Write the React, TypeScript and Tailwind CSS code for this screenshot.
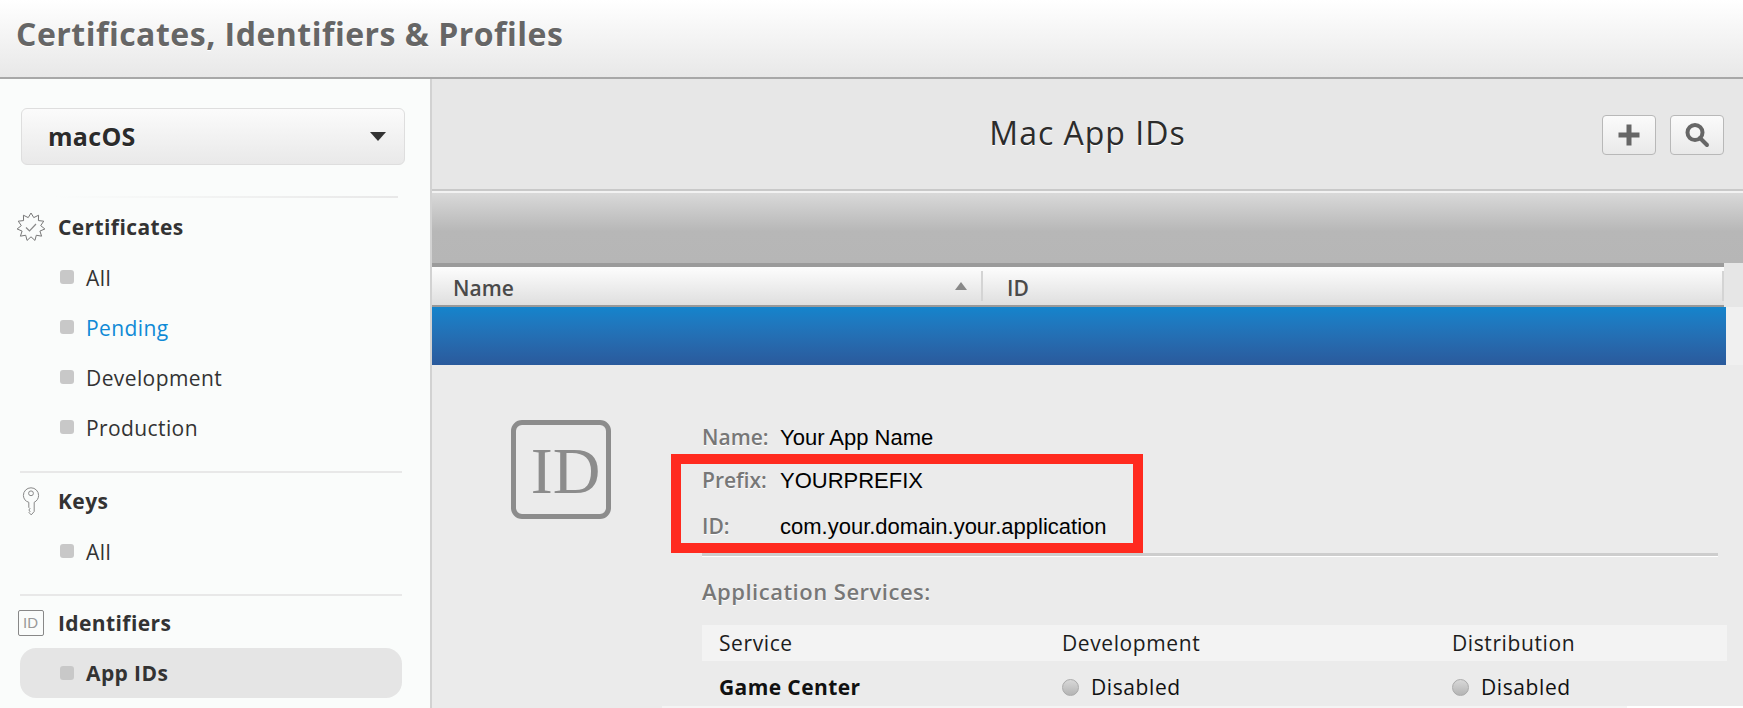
import React from "react";

const sans = "font-['Open_Sans',sans-serif]";

const starPoints = () => {
  const pts: string[] = [];
  for (let i = 0; i < 22; i++) {
    const r = i % 2 === 0 ? 14 : 9.8;
    const a = (i * Math.PI) / 11 - Math.PI / 2;
    pts.push(`${(14 + r * Math.cos(a)).toFixed(2)},${(14 + r * Math.sin(a)).toFixed(2)}`);
  }
  return pts.join(" ");
};

const CertIcon = () => (
  <svg width="28" height="28" viewBox="0 0 28 28" fill="none" stroke="#777" strokeWidth="1">
    <polygon points={starPoints()} />
    <path d="M9 14.5l3.5 3.5 6.5-7" stroke="#888" strokeWidth="1.2" />
  </svg>
);

const KeyIcon = () => (
  <svg width="18" height="29" viewBox="0 0 18 29" fill="none" stroke="#888" strokeWidth="1">
    <path d="M9 .8a7.6 7.6 0 0 1 7.6 7.7c0 3-1.8 5.6-4.4 6.8v9.2l-3 3.4-2.2-2.4 1-1.2-1.2-1.3 1.2-1.3-1.2-1.3V15.3A7.6 7.6 0 0 1 1.4 8.5 7.6 7.6 0 0 1 9 .8z" />
    <circle cx="9" cy="6.3" r="2.4" />
  </svg>
);

const SmallId = () => (
  <div className="flex h-[26px] w-[26px] items-center justify-center rounded-[2px] border border-[#888] font-['Liberation_Sans',sans-serif] text-[15px] font-light text-[#999]">
    ID
  </div>
);

const Item = ({ label, tone = "text-[#333]" }: { label: string; tone?: string }) => (
  <div className="flex h-[50px] items-center pl-[60px]">
    <span className="h-[14px] w-[14px] rounded-[3px] bg-[#c8c8c8]" />
    <span className={`ml-[12px] pt-[4px] text-[21px] tracking-[0.4px] ${tone}`}>{label}</span>
  </div>
);

const SectionHead = ({ icon, label }: { icon: React.ReactNode; label: string }) => (
  <div className="flex h-[50px] items-center">
    <div className="flex w-[58px] justify-center pl-[4px] pr-[1px]">{icon}</div>
    <span className="pt-[2px] text-[21px] font-bold tracking-[0.4px] text-[#333]">{label}</span>
  </div>
);

const Sidebar = () => (
  <aside className="h-full w-[432px] shrink-0 border-r-2 border-[#d2d2d2] bg-[#fafcfb] pt-[29px]">
    <div className="ml-[21px] flex h-[57px] w-[384px] items-center justify-between rounded-[6px] border border-[#dedede] bg-gradient-to-b from-[#fbfbfb] to-[#e9e9e9] pl-[26px] pr-[18px]">
      <span className="text-[25px] font-bold tracking-[0.3px] text-[#2b2b2b] [text-shadow:0_1px_0_#fff]">macOS</span>
      <span className="h-0 w-0 border-x-[8px] border-t-[9px] border-x-transparent border-t-[#333]" />
    </div>
    <div className="ml-[55px] mt-[31px] h-[2px] w-[343px] bg-gradient-to-r from-[#fafcfb] to-[#e8e8e8]" />
    <div className="mt-[4px]">
      <SectionHead icon={<CertIcon />} label="Certificates" />
      <Item label="All" />
      <Item label="Pending" tone="text-[#0f8ad6]" />
      <Item label="Development" />
      <Item label="Production" />
    </div>
    <div className="ml-[20px] mt-[19px] h-[2px] w-[382px] bg-[#e8e8e8]" />
    <div className="mt-[3px]">
      <SectionHead icon={<KeyIcon />} label="Keys" />
      <Item label="All" />
    </div>
    <div className="ml-[20px] mt-[18px] h-[2px] w-[382px] bg-[#e8e8e8]" />
    <div className="mt-[2px]">
      <SectionHead icon={<SmallId />} label="Identifiers" />
      <div className="ml-[20px] flex h-[50px] w-[382px] items-center rounded-[16px] bg-[#e5e5e5] pl-[40px]">
        <span className="h-[14px] w-[14px] rounded-[3px] bg-[#c8c8c8]" />
        <span className="ml-[12px] pt-[2px] text-[21px] font-bold tracking-[0.4px] text-[#333]">App IDs</span>
      </div>
    </div>
  </aside>
);

const ToolButton = ({ children }: { children: React.ReactNode }) => (
  <button className="flex h-[40px] w-[54px] items-center justify-center rounded-[4px] border border-[#b8b8b8] bg-gradient-to-b from-[#fbfbfb] to-[#e9e9e9]">
    {children}
  </button>
);

const DetailRow = ({ label, value }: { label: string; value: string }) => (
  <div className="flex h-[33px] items-center">
    <span className="w-[78px] text-[21px] font-semibold text-[#777] [text-shadow:0_1px_0_#fff]">{label}</span>
    <span className="font-['Liberation_Sans',sans-serif] text-[22px] text-black">{value}</span>
  </div>
);

const Radio = () => (
  <span className="h-[17px] w-[17px] rounded-full border border-[#aaa] bg-gradient-to-b from-[#d8d8d8] to-[#b4b4b4]" />
);

const Main = () => (
  <main className="flex h-full flex-1 flex-col bg-[#ebebeb]">
    <div className="relative flex h-[110px] items-center justify-center bg-[#e7e7e7] pb-[2px]">
      <h2 className="text-[32px] tracking-[1px] text-[#2c2c2c] [text-shadow:0_1px_0_#fff]">Mac App IDs</h2>
      <div className="absolute right-[19px] top-[36px] flex gap-[14px]">
        <ToolButton>
          <svg width="24" height="24" viewBox="0 0 24 24" fill="none" stroke="#666" strokeWidth="5">
            <path d="M12 1.5v21M1.5 12h21" />
          </svg>
        </ToolButton>
        <ToolButton>
          <svg width="26" height="26" viewBox="0 0 26 26" fill="none" stroke="#666" strokeWidth="4">
            <circle cx="11" cy="10.5" r="7.5" />
            <path d="M16 16l7 7" strokeLinecap="round" />
          </svg>
        </ToolButton>
      </div>
    </div>
    <div className="h-[2px] bg-[#c9c9c9]" />
    <div className="h-[2px] bg-[#f2f2f2]" />
    <div className="h-[70px] bg-gradient-to-b from-[#d9d9d9] via-[#b7b7b7] via-[55%] to-[#b6b6b6]" />
    <div className="bg-[#e6e6e6]">
      <div className="h-[4px] w-[1292px] bg-[#9b9b9b]" />
      <div className="flex h-[38px] w-[1292px] items-center bg-gradient-to-b from-[#fdfdfd] to-[#dfdfdf] text-[21px] font-semibold text-[#4a4a4a]">
        <div className="flex h-[30px] w-[551px] items-center justify-between border-r-2 border-[#d4d4d4] pl-[21px] pr-[14px]">
          <span className="pt-[6px]">Name</span>
          <span className="h-0 w-0 border-x-[6px] border-b-[8px] border-x-transparent border-b-[#888]" />
        </div>
        <span className="pl-[24px] pt-[6px]">ID</span>
        <div className="ml-auto h-[30px] w-[2px] bg-[#d4d4d4]" />
      </div>
      <div className="h-[2px] w-[1292px] bg-[#999]" />
    </div>
    <div className="bg-[#f0f0f0]">
      <div className="h-[58px] w-[1294px] bg-gradient-to-b from-[#1484cc] to-[#2a5a9c]" />
    </div>
    <div className="flex min-h-0 flex-1 pt-[55px]">
      <div className="ml-[79px] flex h-[99px] w-[100px] items-center justify-center rounded-[11px] border-[5px] border-[#8c8c8c] pl-[9px] pt-[2px] font-['Liberation_Serif',serif] text-[66px] text-[#8c8c8c]">
        ID
      </div>
      <div className="ml-[60px] w-[1056px]">
        <div className="mt-[1px] ml-[31px]">
          <DetailRow label="Name:" value="Your App Name" />
        </div>
        <div className="flex h-[99px] w-[472px] flex-col justify-between border-[10px] border-[#ff2a1f] pl-[21px]">
          <DetailRow label="Prefix:" value="YOURPREFIX" />
          <DetailRow label="ID:" value="com.your.domain.your.application" />
        </div>
        <div className="ml-[31px] h-[3px] w-[1016px] bg-[#cdcdcd]" />
        <div className="ml-[31px] h-[1px] w-[1016px] bg-white" />
        <p className="ml-[31px] mt-[18px] h-[33px] text-[22px] leading-[33px] font-semibold tracking-[0.5px] text-[#777] [text-shadow:0_1px_0_#fff]">Application Services:</p>
        <div className="ml-[31px] mt-[17px] grid h-[36px] w-[1025px] grid-cols-[343px_390px_1fr] items-center bg-[#f3f3f3] pl-[17px] pt-[2px] text-[21px] tracking-[0.6px] text-[#1c1c1c]">
          <span>Service</span>
          <span>Development</span>
          <span>Distribution</span>
        </div>
        <div className="ml-[31px] mt-[11px] grid w-[1025px] grid-cols-[343px_390px_1fr] items-center pl-[17px] text-[21px] text-[#111]">
          <span className="font-bold tracking-[0.4px]">Game Center</span>
          <span className="flex items-center gap-[12px] tracking-[0.6px]"><Radio />Disabled</span>
          <span className="flex items-center gap-[12px] tracking-[0.6px]"><Radio />Disabled</span>
        </div>
      </div>
    </div>
    <div className="ml-[230px] flex h-[2px] shrink-0 bg-[#f4f4f4]">
      <div className="ml-auto h-[2px] w-[116px] bg-white" />
    </div>
  </main>
);

export default function App() {
  return (
    <div className={`flex h-[708px] w-[1743px] flex-col overflow-hidden ${sans}`}>
      <header className="flex h-[79px] shrink-0 items-center border-b-2 border-[#a8a8a8] bg-gradient-to-b from-[#ffffff] to-[#e8e8e8] pb-[10px] pl-[16px]">
        <h1 className="text-[32px] font-bold tracking-[0.5px] text-[#666] [text-shadow:0_1px_0_#fff]">Certificates, Identifiers &amp; Profiles</h1>
      </header>
      <div className="flex min-h-0 flex-1">
        <Sidebar />
        <Main />
      </div>
    </div>
  );
}
